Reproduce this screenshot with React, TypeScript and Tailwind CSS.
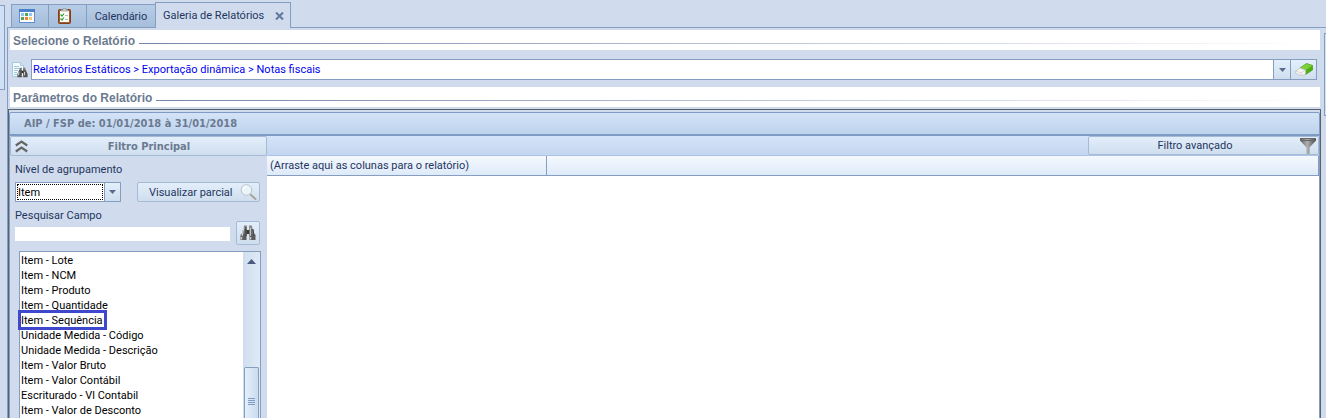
import { ReactNode } from "react";

const campos = [
  "Item - Lote",
  "Item - NCM",
  "Item - Produto",
  "Item - Quantidade",
  "Item - Sequência",
  "Unidade Medida - Código",
  "Unidade Medida - Descrição",
  "Item - Valor Bruto",
  "Item - Valor Contábil",
  "Escriturado - Vl Contabil",
  "Item - Valor de Desconto",
];

function CalendarIcon() {
  return (
    <svg width="16" height="14" viewBox="0 0 16 14" aria-hidden="true">
      <rect x="0.5" y="0.5" width="15" height="13" fill="#fdfdff" stroke="#5f8fd0" />
      <rect width="16" height="3" fill="#4a80cc" />
      <rect x="2" y="4" width="3" height="3" fill="#8fc4f8" />
      <rect x="6" y="4" width="3" height="3" fill="#52a552" />
      <rect x="10" y="4" width="3" height="3" fill="#8fc4f8" />
      <rect x="2" y="8" width="3" height="3" fill="#52a552" />
      <rect x="6" y="8" width="3" height="3" fill="#f08048" />
      <rect x="10" y="8" width="3" height="3" fill="#f5c860" />
    </svg>
  );
}

function ClipboardIcon() {
  return (
    <svg width="14" height="16" viewBox="0 0 14 16" aria-hidden="true">
      <rect x="0.5" y="1.5" width="12" height="14" rx="1" fill="#b05a28" stroke="#7c3f20" />
      <rect x="2" y="3" width="9" height="11" fill="#fbfdfb" />
      <path d="M3 3V1.5h2L6 0h1l1 1.5h2V3z" fill="#d8d8d8" stroke="#777" strokeWidth="0.6" />
      <path d="M2.5 6.5L4 8l2-2.5M2.5 10.5L4 12l2-2.5" fill="none" stroke="#30a830" strokeWidth="1.2" />
      <path d="M7 7.5h3M7 11.5h3" stroke="#b4c0b8" />
    </svg>
  );
}

function Binoculars() {
  return (
    <svg width="16" height="16" viewBox="0 0 16 16" aria-hidden="true">
      <path d="M4 .5h3v4H3.500zM9 .5h3l.5 4H9z" fill="#8a8a8a" />
      <path d="M3.200 4H7v7H1zM12.800 4H9v7h6z" fill="#6a6a6a" />
      <path d="M.5 9.500h6v5.500h-6zM9.500 9.500h6v5.500h-6z" fill="#5c5c5c" />
      <path d="M6.500 5h3v4h-3z" fill="#383838" />
      <path d="M3.800 3L2 11M10.300 3v8" stroke="#cfcfcf" strokeWidth="1.200" />
      <path d="M5.800 2v9M13 4l1 7" stroke="#444" />
      <path d="M1.500 12v2.500M10.500 12v2.500" stroke="#c9c9c9" strokeWidth="1.500" />
    </svg>
  );
}

function ReportSearchIcon() {
  return (
    <svg width="16" height="16" viewBox="0 0 16 16" aria-hidden="true">
      <path d="M.5.5h8l3 3v11H.5z" fill="#f4fafd" stroke="#a3cbe0" />
      <path d="M8.5.5v3h3" fill="#d5ebf5" stroke="#a3cbe0" />
      <path d="M2 4.5h5M2 6.5h7M2 8.5h4M2 10.5h3M2 12.5h3" stroke="#9fcadf" />
      <svg x="5" y="5" width="11" height="11" viewBox="0 0 16 16">
        <path d="M4 1h3v4H3.4zM9 1h3l.6 4H9z" fill="#777" />
        <path d="M3.2 4.5H7V15H.6v-5zM12.8 4.5H9V15h6.4v-5z" fill="#555" />
        <path d="M6.5 5.5h3V9h-3z" fill="#333" />
        <path d="M3 7l-1 5M11 7v5" stroke="#ddd" strokeWidth="1.4" />
      </svg>
    </svg>
  );
}

function EraserIcon() {
  return (
    <svg width="18" height="13" viewBox="0 0 18 13" aria-hidden="true">
      <path d="M5 5L11.500.5l6 2V7L10.500 11.500z" fill="#4fb014" stroke="#3f9a14" strokeWidth="0.7" />
      <path d="M5.200 5L11.500.7l5.700 2L10.500 7z" fill="#7ed038" />
      <path d="M.6 8L5 5l5.500 2v4.500L6 12.500.6 10.500z" fill="#f4f4f4" stroke="#c2bcbc" strokeWidth="0.7" />
      <path d="M.8 8.200l5.200 1.600L10.300 7M6 9.800v2.500" fill="none" stroke="#cfcaca" strokeWidth="0.7" />
    </svg>
  );
}

function MagnifierIcon() {
  return (
    <svg width="17" height="16" viewBox="0 0 17 16" aria-hidden="true">
      <path d="M10.5 10.5l5 4.5" stroke="#a8a49e" strokeWidth="2" strokeLinecap="round" />
      <circle cx="6.5" cy="6" r="5.300" fill="#e9f4fb" stroke="#b9c3ca" />
      <path d="M3 6a3.5 3.5 0 0 1 3.500-3.500" fill="none" stroke="#fff" strokeWidth="1.5" />
    </svg>
  );
}

function FunnelIcon() {
  return (
    <svg width="16" height="16" viewBox="0 0 16 16" aria-hidden="true">
      <defs>
        <linearGradient id="funil">
          <stop offset="0" stopColor="#5a5a5a" />
          <stop offset="0.45" stopColor="#b0b0b0" />
          <stop offset="1" stopColor="#484848" />
        </linearGradient>
      </defs>
      <path d="M0 0h16v2.500L9.500 9.500V16h-3V9.500L0 2.500z" fill="url(#funil)" />
      <path d="M0 .5h16M1 2.500h14" stroke="#666" />
    </svg>
  );
}

function CollapseIcon() {
  return (
    <svg width="13" height="13" viewBox="0 0 13 13" aria-hidden="true">
      <path d="M.8 5.500l5.700-4 5.700 4M.8 11.500l5.700-4 5.700 4" fill="none" stroke="#666" strokeWidth="2.200" />
    </svg>
  );
}

function DownArrow() {
  return (
    <svg width="7" height="4" viewBox="0 0 7 4" aria-hidden="true">
      <path d="M0 0h7L3.500 4z" fill="#5a6a90" />
    </svg>
  );
}

function SectionTitle({ children }: { children: ReactNode }) {
  return (
    <div className="mr-1 ml-[2px] flex h-5 items-center gap-1 bg-white pt-[2px] pr-2 pl-[3px]">
      <h2 className="whitespace-nowrap font-['Liberation_Sans',sans-serif] text-[12px] font-bold text-[#6b7a90]">
        {children}
      </h2>
      <div className="mt-1 h-px flex-1 bg-linear-to-r from-[#7488aa] to-white" />
    </div>
  );
}

export default function App() {
  return (
    <div className="flex h-screen overflow-hidden bg-[#d0dced] font-[Roboto,'DejaVu_Sans',sans-serif] text-[11px] leading-[15px] text-[#1f355e]">
      <div className="mt-[5px] mr-[2px] h-[85px] w-[5px] shrink-0 border-y border-r border-[#859ebf] bg-[#cfe0f7]" />

      <main className="flex min-w-0 flex-1 flex-col pt-[2px]">
        {/* Abas */}
        <div role="tablist" className="flex shrink-0 items-end">
          <div className="h-[25px] w-1 border-b border-[#859ebf]" />
          <button role="tab" aria-label="Painel" className="flex h-6 w-[38px] items-center border border-[#859ebf] bg-linear-to-b from-[#b7cce6] to-[#a5bedb] pl-[7px]">
            <CalendarIcon />
          </button>
          <button role="tab" aria-label="Tarefas" className="flex h-6 w-[38px] items-center border-y border-r border-[#859ebf] bg-linear-to-b from-[#b7cce6] to-[#a5bedb] pl-[9px]">
            <ClipboardIcon />
          </button>
          <button role="tab" className="h-6 w-[68px] whitespace-nowrap border-y border-[#859ebf] bg-linear-to-b from-[#b7cce6] to-[#a5bedb]">
            Calendário
          </button>
          <div role="tab" aria-selected="true" className="flex h-[26px] w-[136px] items-center justify-between border-x border-t border-[#859ebf] pr-[6px] pl-[7px]">
            <span className="whitespace-nowrap">Galeria de Relatórios</span>
            <button aria-label="Fechar aba">
              <svg width="9" height="8" viewBox="0 0 9 8">
                <path d="M1 .5l7 7M8 .5l-7 7" stroke="#62759c" strokeWidth="2" />
              </svg>
            </button>
          </div>
          <div className="h-[25px] flex-1 border-b border-[#859ebf]" />
        </div>

        <div className="flex min-h-0 flex-1">
          <div className="flex min-w-0 flex-1 flex-col border-l border-[#859ebf] pt-[2px]">
            <SectionTitle>Selecione o Relatório</SectionTitle>

            <div className="mt-[9px] mr-[7px] ml-1 flex h-[21px] shrink-0 items-center gap-[3px]">
              <ReportSearchIcon />
              <div className="flex h-full min-w-0 flex-1 border border-[#859ebf] bg-white">
                <select aria-label="Relatório" className="min-w-0 flex-1 appearance-none bg-white pl-px text-[#0000f0] outline-none">
                  <option>Relatórios Estáticos &gt; Exportação dinâmica &gt; Notas fiscais</option>
                </select>
                <span className="flex w-[17px] items-center justify-center border-l border-[#859ebf] bg-linear-to-b from-[#e3effb] to-[#cfdeee]">
                  <DownArrow />
                </span>
                <button aria-label="Limpar" className="flex w-[26px] items-center justify-center border-l border-[#859ebf] bg-linear-to-b from-[#e3effb] to-[#cfdeee]">
                  <EraserIcon />
                </button>
              </div>
            </div>

            <div className="mt-[7px]">
              <SectionTitle>Parâmetros do Relatório</SectionTitle>
            </div>

            <section className="mt-[2px] mr-[3px] flex min-h-0 flex-1 flex-col border-x border-t border-[#5b6168] pt-[2px]">
              <div className="h-6 shrink-0 rounded-t-xs border border-b-2 border-[#7f9ac3] bg-linear-to-b from-[#d4e3f8] to-[#bdd3ec] pl-[14px] font-['DejaVu_Sans_Condensed','DejaVu_Sans',sans-serif] leading-[21px] font-bold text-[#6b7a90]">
                AIP / FSP de: 01/01/2018 à 31/01/2018
              </div>

              <div className="flex min-h-0 flex-1">
                <aside className="flex w-[258px] shrink-0 flex-col border-l border-[#859ebf]">
                  <button className="flex h-5 shrink-0 items-center rounded-xs border border-[#a5bad5] bg-linear-to-b from-[#e3eefb] to-[#cfdeee] pl-1 font-['DejaVu_Sans_Condensed','DejaVu_Sans',sans-serif] font-bold text-[#6b7a90]">
                    <CollapseIcon />
                    <span className="flex-1 pl-1">Filtro Principal</span>
                  </button>

                  <div className="flex min-h-0 flex-1 flex-col pr-[7px] pl-[5px]">
                    <label htmlFor="nivel" className="mt-[6px]">
                      Nível de agrupamento
                    </label>
                    <div className="mt-[5px] flex h-5 shrink-0 justify-between">
                      <div className="flex w-[106px] border border-[#859ebf] bg-white p-px">
                        <select id="nivel" className="min-w-0 flex-1 appearance-none border border-dotted border-black bg-white text-black outline-none">
                          <option>Item</option>
                        </select>
                        <span className="-my-px -mr-px ml-px flex w-4 items-center justify-center border-l border-[#859ebf] bg-linear-to-b from-[#e3effb] to-[#cfdeee]">
                          <DownArrow />
                        </span>
                      </div>
                      <button className="flex w-[123px] items-center justify-between rounded-xs border border-[#a5bad5] bg-linear-to-b from-[#e3eefb] to-[#cfdeee] pr-[2px] pl-[11px] whitespace-nowrap">
                        Visualizar parcial
                        <MagnifierIcon />
                      </button>
                    </div>

                    <div className="flex shrink-0 items-end justify-between">
                      <div className="flex flex-col pb-1">
                        <label htmlFor="campo" className="mt-[6px]">
                          Pesquisar Campo
                        </label>
                        <input id="campo" className="mt-1 h-[14px] w-[215px] bg-white px-1 outline-none" />
                      </div>
                      <button aria-label="Pesquisar" className="flex h-6 w-6 items-center justify-center rounded-xs border border-[#a5bad5] bg-linear-to-b from-[#e3eefb] to-[#cfdeee]">
                        <Binoculars />
                      </button>
                    </div>

                    <div className="mt-[6px] -mr-px ml-[4px] flex min-h-0 flex-1 border-x border-t border-[#859ebf] bg-white">
                      <ul role="listbox" aria-label="Campos" className="min-w-0 flex-1 pt-px pl-px text-black">
                        {campos.map((campo) => (
                          <li key={campo} role="option" className="relative whitespace-nowrap">
                            {campo}
                            {campo === "Item - Sequência" && (
                              <span className="absolute -top-[3px] -left-[3px] h-5 w-[89px] border-3 border-[#3f48cc]" />
                            )}
                          </li>
                        ))}
                      </ul>
                      <div className="flex w-[17px] flex-col items-center bg-linear-to-r from-[#cfdeee] to-[#dfeaf6] pt-[7px]">
                        <svg width="9" height="5" viewBox="0 0 9 5" aria-hidden="true">
                          <path d="M4.500 0L9 5H0z" fill="#4a5a80" />
                        </svg>
                        <div className="mt-[103px] flex w-[15px] flex-1 flex-col items-center gap-px rounded-t-xs border-x border-t border-[#859ebf] bg-linear-to-r from-[#e3effb] to-[#cbdcf0] pt-[30px]">
                          <div className="h-px w-[7px] bg-[#7f9ac3]" />
                          <div className="h-px w-[7px] bg-[#7f9ac3]" />
                          <div className="h-px w-[7px] bg-[#7f9ac3]" />
                          <div className="h-px w-[7px] bg-[#7f9ac3]" />
                        </div>
                      </div>
                    </div>
                  </div>
                </aside>

                <div className="flex min-w-0 flex-1 flex-col border-r border-[#859ebf]">
                  <div className="flex h-5 shrink-0 justify-end border-b border-[#a9c4e4] bg-linear-to-b from-[#d4e3f8] to-[#c3d7f0]">
                    <button className="flex w-[231px] items-center rounded-xs border border-[#a5bad5] bg-linear-to-b from-[#e3eefb] to-[#cfdeee] pr-[2px]">
                      <span className="flex-1 pl-[1px]">Filtro avançado</span>
                      <FunnelIcon />
                    </button>
                  </div>
                  <div className="flex h-5 shrink-0 border-r border-b border-[#859ebf] bg-linear-to-b from-[#f5f9fe] to-[#deeaf9]">
                    <div className="w-[280px] border-r border-[#859ebf] pt-[2px] pl-[3px]">
                      (Arraste aqui as colunas para o relatório)
                    </div>
                  </div>
                  <div className="flex-1 bg-white" />
                </div>
              </div>
            </section>
          </div>

          <div className="mt-[5px] h-[83px] w-[2px] shrink-0 border-y border-l border-[#859ebf] bg-[#cfe0f7]" />
        </div>
      </main>
    </div>
  );
}
